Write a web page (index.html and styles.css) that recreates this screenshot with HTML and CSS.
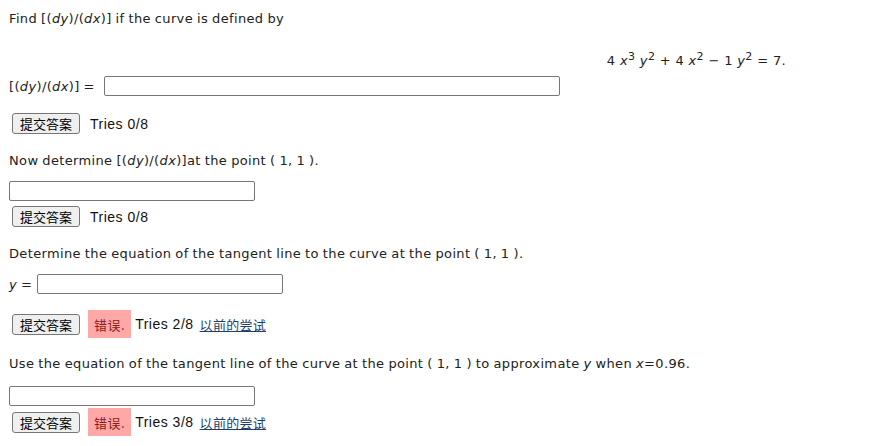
FILE: index.html
```html
<!DOCTYPE html>
<html>
<head>
<meta charset="utf-8">
<link rel="stylesheet" href="styles.css">
</head>
<body>
<div class="page">
  <p class="q q1">Find [(<i>dy</i>)/(<i>dx</i>)] if the curve is defined by</p>
  <div class="eq">4 <i>x</i><sup>3</sup> <i>y</i><sup>2</sup> + 4 <i>x</i><sup>2</sup> &minus; 1 <i>y</i><sup>2</sup> = 7.</div>
  <div class="row lab">
    <span class="label">[(<i>dy</i>)/(<i>dx</i>)] =</span>
    <span class="inp wide"></span>
  </div>
  <div class="row sub s1">
    <span class="btn">提交答案</span>
    <span class="tries">Tries 0/8</span>
  </div>

  <p class="q q2">Now determine [(<i>dy</i>)/(<i>dx</i>)]at the point ( 1, 1 ).</p>
  <div class="row"><span class="inp"></span></div>
  <div class="row sub s2">
    <span class="btn">提交答案</span>
    <span class="tries">Tries 0/8</span>
  </div>

  <p class="q q3">Determine the equation of the tangent line to the curve at the point ( 1, 1 ).</p>
  <div class="row lab2">
    <span class="label"><i>y</i> =</span>
    <span class="inp"></span>
  </div>
  <div class="row sub s3">
    <span class="btn">提交答案</span>
    <span class="err">错误.</span>
    <span class="tries">Tries 2/8</span>
    <a class="prev" href="#">以前的尝试</a>
  </div>

  <p class="q q4">Use the equation of the tangent line of the curve at the point ( 1, 1 ) to approximate <i>y</i> when <i>x</i>=0.96.</p>
  <div class="row"><span class="inp"></span></div>
  <div class="row sub s4">
    <span class="btn">提交答案</span>
    <span class="err">错误.</span>
    <span class="tries">Tries 3/8</span>
    <a class="prev" href="#">以前的尝试</a>
  </div>
</div>
</body>
</html>
```
FILE: styles.css
```css
html, body {
  margin: 0;
  padding: 0;
  background: #fff;
}
.page {
  padding: 0 0 0 9px;
  font-family: "DejaVu Sans", Verdana, sans-serif;
  font-size: 13px;
  letter-spacing: 0.35px;
  word-spacing: -0.5px;
  color: #222;
}
.q {
  margin: 0;
  line-height: 16px;
  height: 16px;
}
.q1 { padding-top: 11px; }
.eq {
  text-align: right;
  padding-right: 110px;
  margin-top: 26px;
  line-height: 16px;
  height: 16px;
  word-spacing: 0;
}
sup {
  font-size: 11px;
  vertical-align: 5px;
  line-height: 0;
}
.row {
  display: flex;
  align-items: center;
}
.lab { margin-top: 7px; }
.lab .label { margin-right: 9px; }
.lab2 .label { margin-right: 5px; }
.inp {
  display: block;
  width: 244px;
  height: 18px;
  border: 1px solid #767676;
  border-radius: 2px;
  background: #fff;
}
.inp.wide { width: 454px; }
.btn {
  display: inline-flex;
  align-items: center;
  justify-content: center;
  box-sizing: border-box;
  width: 68px;
  height: 21px;
  margin-left: 3px;
  border: 1px solid #767676;
  border-radius: 3px;
  background: #efefef;
  font-family: "Noto Sans CJK SC", sans-serif;
  font-size: 13px;
  letter-spacing: 0;
  word-spacing: 0;
  color: #000;
}
.tries {
  font-family: "Liberation Sans", Arial, sans-serif;
  font-size: 14px;
  letter-spacing: 0.5px;
  word-spacing: 0;
  color: #111;
  margin-left: 10px;
}
.err {
  display: inline-flex;
  align-items: center;
  height: 28px;
  padding: 0 6px;
  margin-left: 8px;
  background: #ffa8a8;
  color: #8b1a1a;
  font-family: "Noto Sans CJK SC", sans-serif;
  font-size: 13px;
  letter-spacing: 0.5px;
}
.err + .tries { margin-left: 4px; }
.prev {
  margin-left: 6px;
  color: #1c3f6e;
  font-family: "Noto Sans CJK SC", sans-serif;
  font-size: 13px;
  letter-spacing: 0.3px;
}
.s1 { margin-top: 17px; }
.q2 { margin-top: 19px; }
.q2 + .row { margin-top: 12px; }
.s2 { margin-top: 5px; }
.q3 { margin-top: 19px; }
.lab2 { margin-top: 12px; }
.s3 { margin-top: 16px; }
.q4 { margin-top: 18px; }
.q4 + .row { margin-top: 14px; }
.s4 { margin-top: 2px; }
```
